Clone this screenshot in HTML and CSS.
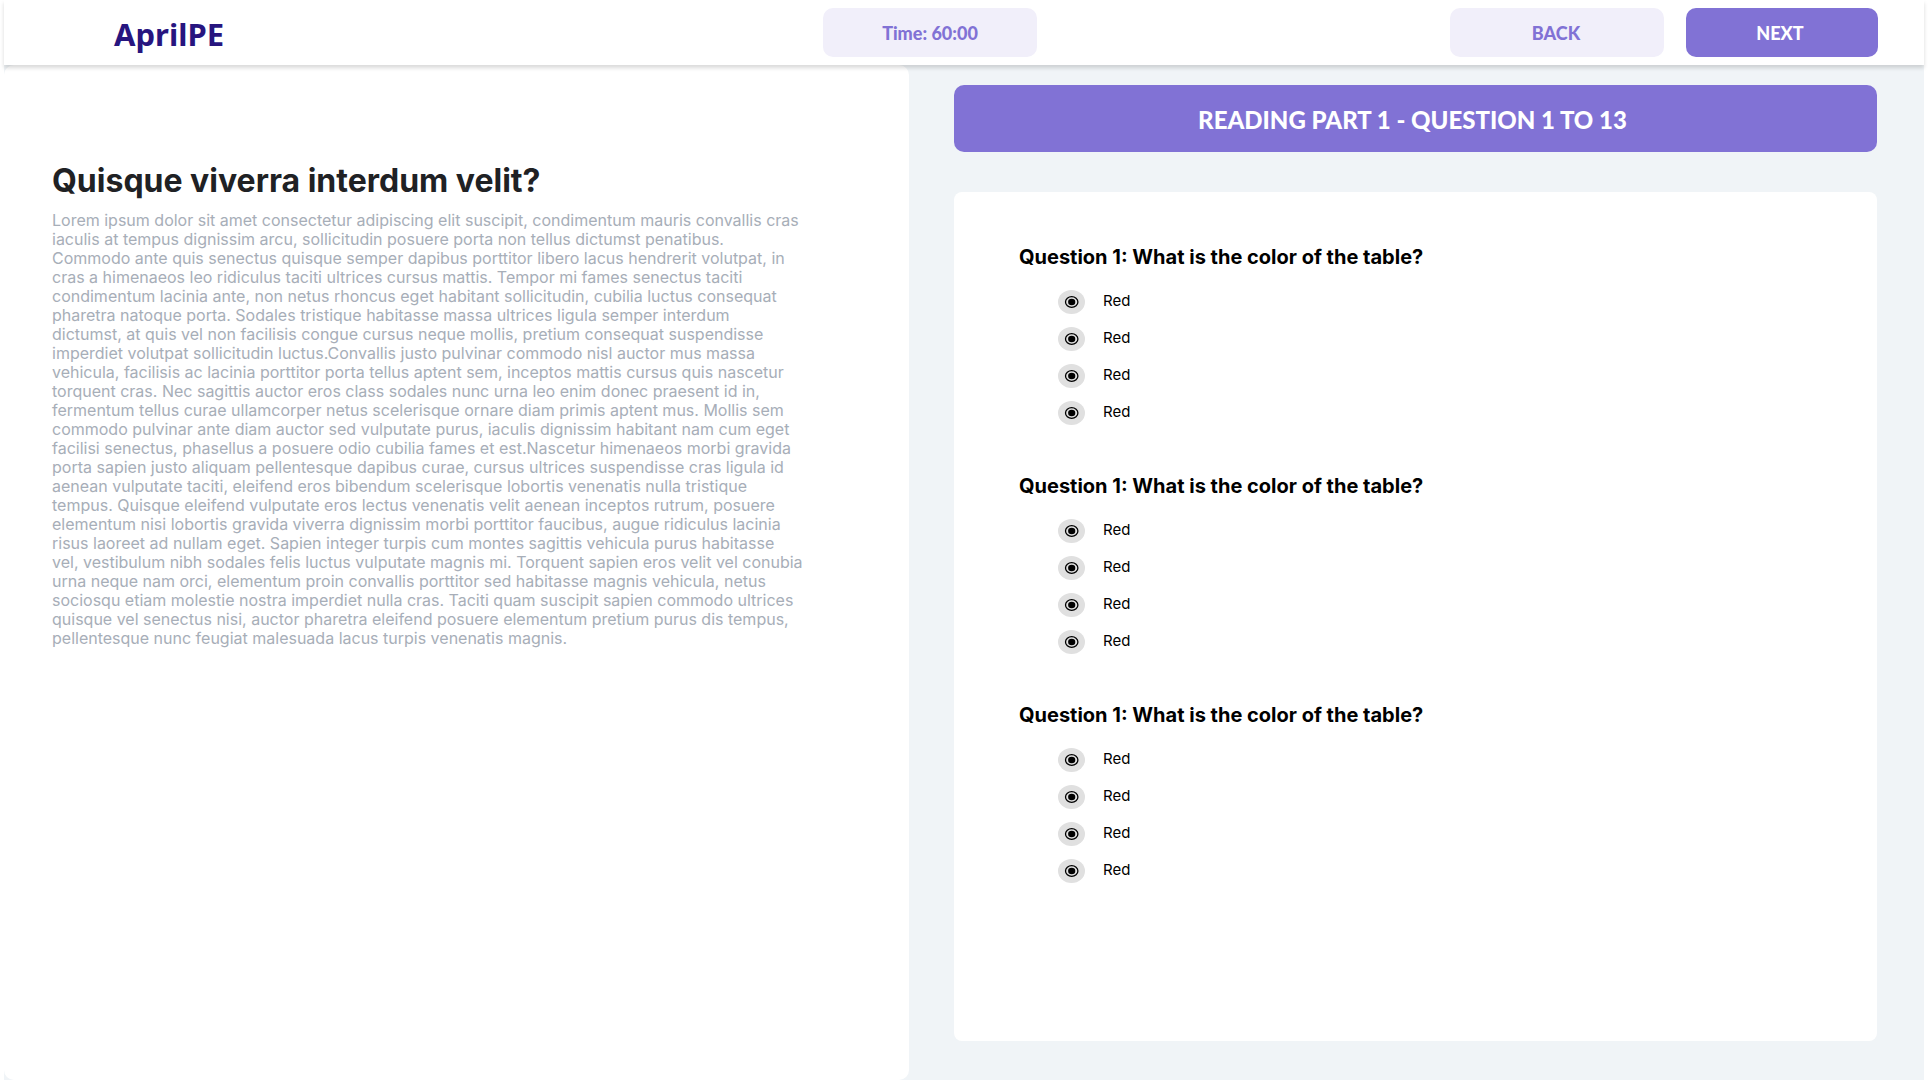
FILE: index.html
```html
<!DOCTYPE html>
<html lang="en">
<head>
<meta charset="utf-8">
<meta name="viewport" content="width=device-width, initial-scale=1">
<title>AprilPE - Reading Part 1</title>
<link rel="stylesheet" href="styles.css">
</head>
<body>
<div class="frame">
  <header class="topbar">
    <div class="brand"><a class="logo" href="#">AprilPE</a></div>
    <div class="pill timer" role="timer">Time: 60:00</div>
    <nav class="actions">
      <button class="pill" type="button">BACK</button>
      <button class="pill primary" type="button">NEXT</button>
    </nav>
  </header>
  <main class="content">
    <article class="passage">
      <h1>Quisque viverra interdum velit?</h1>
      <p>Lorem ipsum dolor sit amet consectetur adipiscing elit suscipit, condimentum mauris convallis cras<br>
      iaculis at tempus dignissim arcu, sollicitudin posuere porta non tellus dictumst penatibus.<br>
      Commodo ante quis senectus quisque semper dapibus porttitor libero lacus hendrerit volutpat, in<br>
      cras a himenaeos leo ridiculus taciti ultrices cursus mattis. Tempor mi fames senectus taciti<br>
      condimentum lacinia ante, non netus rhoncus eget habitant sollicitudin, cubilia luctus consequat<br>
      pharetra natoque porta. Sodales tristique habitasse massa ultrices ligula semper interdum<br>
      dictumst, at quis vel non facilisis congue cursus neque mollis, pretium consequat suspendisse<br>
      imperdiet volutpat sollicitudin luctus.Convallis justo pulvinar commodo nisl auctor mus massa<br>
      vehicula, facilisis ac lacinia porttitor porta tellus aptent sem, inceptos mattis cursus quis nascetur<br>
      torquent cras. Nec sagittis auctor eros class sodales nunc urna leo enim donec praesent id in,<br>
      fermentum tellus curae ullamcorper netus scelerisque ornare diam primis aptent mus. Mollis sem<br>
      commodo pulvinar ante diam auctor sed vulputate purus, iaculis dignissim habitant nam cum eget<br>
      facilisi senectus, phasellus a posuere odio cubilia fames et est.Nascetur himenaeos morbi gravida<br>
      porta sapien justo aliquam pellentesque dapibus curae, cursus ultrices suspendisse cras ligula id<br>
      aenean vulputate taciti, eleifend eros bibendum scelerisque lobortis venenatis nulla tristique<br>
      tempus. Quisque eleifend vulputate eros lectus venenatis velit aenean inceptos rutrum, posuere<br>
      elementum nisi lobortis gravida viverra dignissim morbi porttitor faucibus, augue ridiculus lacinia<br>
      risus laoreet ad nullam eget. Sapien integer turpis cum montes sagittis vehicula purus habitasse<br>
      vel, vestibulum nibh sodales felis luctus vulputate magnis mi. Torquent sapien eros velit vel conubia<br>
      urna neque nam orci, elementum proin convallis porttitor sed habitasse magnis vehicula, netus<br>
      sociosqu etiam molestie nostra imperdiet nulla cras. Taciti quam suscipit sapien commodo ultrices<br>
      quisque vel senectus nisi, auctor pharetra eleifend posuere elementum pretium purus dis tempus,<br>
      pellentesque nunc feugiat malesuada lacus turpis venenatis magnis.</p>
    </article>
    <section class="quiz">
      <h2 class="banner">READING PART 1 - QUESTION 1 TO 13</h2>
      <form class="card">
        <fieldset>
          <legend>Question 1: What is the color of the table?</legend>
          <label><input type="radio" name="q1" checked>Red</label>
          <label><input type="radio" name="q1">Red</label>
          <label><input type="radio" name="q1">Red</label>
          <label><input type="radio" name="q1">Red</label>
        </fieldset>
        <fieldset>
          <legend>Question 1: What is the color of the table?</legend>
          <label><input type="radio" name="q2" checked>Red</label>
          <label><input type="radio" name="q2">Red</label>
          <label><input type="radio" name="q2">Red</label>
          <label><input type="radio" name="q2">Red</label>
        </fieldset>
        <fieldset>
          <legend>Question 1: What is the color of the table?</legend>
          <label><input type="radio" name="q3" checked>Red</label>
          <label><input type="radio" name="q3">Red</label>
          <label><input type="radio" name="q3">Red</label>
          <label><input type="radio" name="q3">Red</label>
        </fieldset>
      </form>
    </section>
  </main>
</div>
</body>
</html>
```
FILE: styles.css
```css
* {
  box-sizing: border-box;
}

body {
  margin: 0;
  background: #fff;
  font-family: Inter, "Liberation Sans", sans-serif;
}

.frame {
  display: flex;
  flex-direction: column;
  min-height: 100vh;
  margin: 0 4px;
  background: #f0f4f7;
}

/* Top bar */
.topbar {
  position: relative;
  display: grid;
  grid-template-columns: 819fr 214px 841fr;
  align-items: center;
  padding: 8px 46px 8px 0;
  background: #fff;
  box-shadow: 0 3px 4px rgba(0, 0, 0, 0.15);
}

.brand {
  padding: 2px 0 0 110px;
}

.logo {
  color: #27157f;
  font: 700 31px/40px "Noto Sans", "Open Sans", sans-serif;
  text-decoration: none;
}

.pill {
  width: 214px;
  height: 49px;
  padding: 0;
  border: 0;
  border-radius: 10px;
  background: #f1effa;
  color: #8172d5;
  font: 900 18px/51px Lato, sans-serif;
  text-align: center;
}

.actions {
  display: flex;
  justify-content: flex-end;
  gap: 22px;
}

.actions .pill {
  padding: 0 2px 0 0;
}

.actions .primary {
  width: 192px;
  padding-right: 4px;
  background: #8172d5;
  color: #fff;
}

/* Two columns under the bar */
.content {
  display: grid;
  flex: 1;
  grid-template-columns: 905fr 1015fr;
}

.passage {
  padding: 96px 48px 48px;
  border-radius: 10px;
  background: #fff;
}

.passage h1 {
  margin: 0 0 10px;
  color: #202124;
  font-size: 32px;
  line-height: 40px;
}

.passage p {
  margin: 0;
  color: #a7aeb8;
  font-size: 16px;
  line-height: 19px;
}

.quiz {
  display: flex;
  flex-direction: column;
  gap: 40px;
  padding: 20px 47px 39px 45px;
}

.banner {
  height: 67px;
  margin: 0;
  padding: 0 6px 0 0;
  border-radius: 10px;
  background: #8172d5;
  color: #fff;
  font: 900 24px/69px Lato, sans-serif;
  text-align: center;
}

.card {
  display: flex;
  flex: 1;
  flex-direction: column;
  gap: 49px;
  padding: 53px 65px;
  border-radius: 8px;
  background: #fff;
}

.card fieldset {
  display: flex;
  flex-direction: column;
  gap: 13px;
  min-width: 0;
  margin: 0;
  padding: 0 0 0 39px;
  border: 0;
}

.card legend {
  margin: 0 0 21px -39px;
  padding: 0;
  font-size: 20px;
  font-weight: 700;
  line-height: 24px;
}

.card label {
  display: flex;
  gap: 18px;
  font-size: 15px;
  line-height: 22px;
}

/* Radio: dark ring and dot on a grey oval */
.card input {
  width: 27px;
  height: 24px;
  margin: 0;
  background: url("data:image/svg+xml,%3Csvg xmlns='http://www.w3.org/2000/svg' width='27' height='24' viewBox='0 0 27 24'%3E%3Cellipse cx='13.5' cy='12' rx='13.5' ry='12' fill='%23e0e0e0'/%3E%3Cellipse cx='13.7' cy='12' rx='6.2' ry='5.4' fill='none' stroke='%23000' stroke-width='1.3'/%3E%3Cellipse cx='13.7' cy='12' rx='3.6' ry='3.2'/%3E%3C/svg%3E") center no-repeat;
  appearance: none;
}
```
